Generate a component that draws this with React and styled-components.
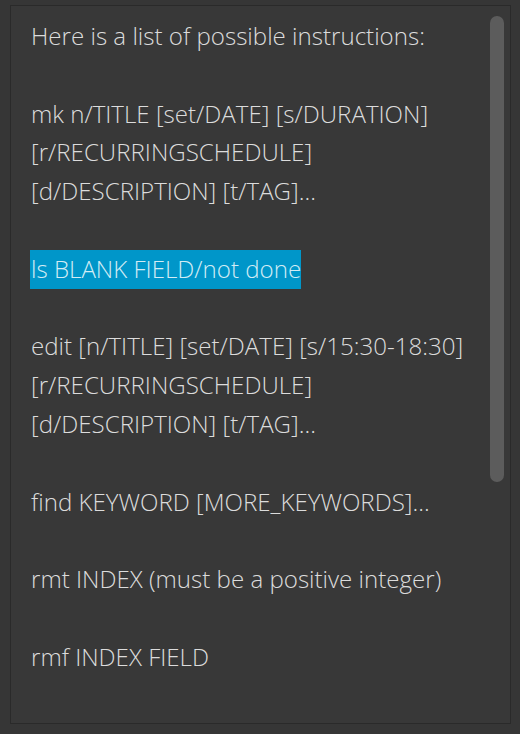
import React from "react";
import styled, { createGlobalStyle } from "styled-components";

const Global = createGlobalStyle`
  html, body { margin: 0; padding: 0; background: #363636; }
  body { width: 520px; height: 734px; overflow: hidden; }
`;

const Frame = styled.div`
  box-sizing: border-box;
  width: 520px;
  height: 734px;
  padding: 5px 9px 10px 10px;
  background: #363636;
`;

const Panel = styled.div`
  box-sizing: border-box;
  height: 100%;
  border: 1px solid #2a2a2a;
  background: #383838;
  display: flex;
`;

const Content = styled.div`
  flex: 1;
  padding: 11px 0 0 20px;
  font-family: "Open Sans", "Noto Sans", sans-serif;
  font-size: 24.1px;
  font-weight: 300;
  line-height: 38.8px;
  color: #dcdcdc;
  white-space: pre;
`;

const Line = styled.div`
  height: 38.8px;
`;

const Highlight = styled.span`
  display: inline-block;
  margin-left: -1px;
  padding-left: 1px;
  background: #0096c9;
  color: #d2ecf5;
`;

const Track = styled.div`
  width: 14px;
  padding: 10px 6px 0 0;
`;

const Thumb = styled.div`
  width: 14px;
  height: 466px;
  border-radius: 7px;
  background: #5c5c5c;
`;

const lines = [
  "Here is a list of possible instructions:",
  "",
  "mk n/TITLE [set/DATE] [s/DURATION]",
  "[r/RECURRINGSCHEDULE]",
  "[d/DESCRIPTION] [t/TAG]...",
  "",
  { hl: "ls BLANK FIELD/not done" },
  "",
  "edit [n/TITLE] [set/DATE] [s/15:30-18:30]",
  "[r/RECURRINGSCHEDULE]",
  "[d/DESCRIPTION] [t/TAG]...",
  "",
  "find KEYWORD [MORE_KEYWORDS]...",
  "",
  "rmt INDEX (must be a positive integer)",
  "",
  "rmf INDEX FIELD",
];

export default function App() {
  return (
    <>
      <Global />
      <Frame>
        <Panel>
          <Content>
            {lines.map((l, i) => (
              <Line key={i}>
                {typeof l === "string" ? l : <Highlight>{l.hl}</Highlight>}
              </Line>
            ))}
          </Content>
          <Track>
            <Thumb />
          </Track>
        </Panel>
      </Frame>
    </>
  );
}
